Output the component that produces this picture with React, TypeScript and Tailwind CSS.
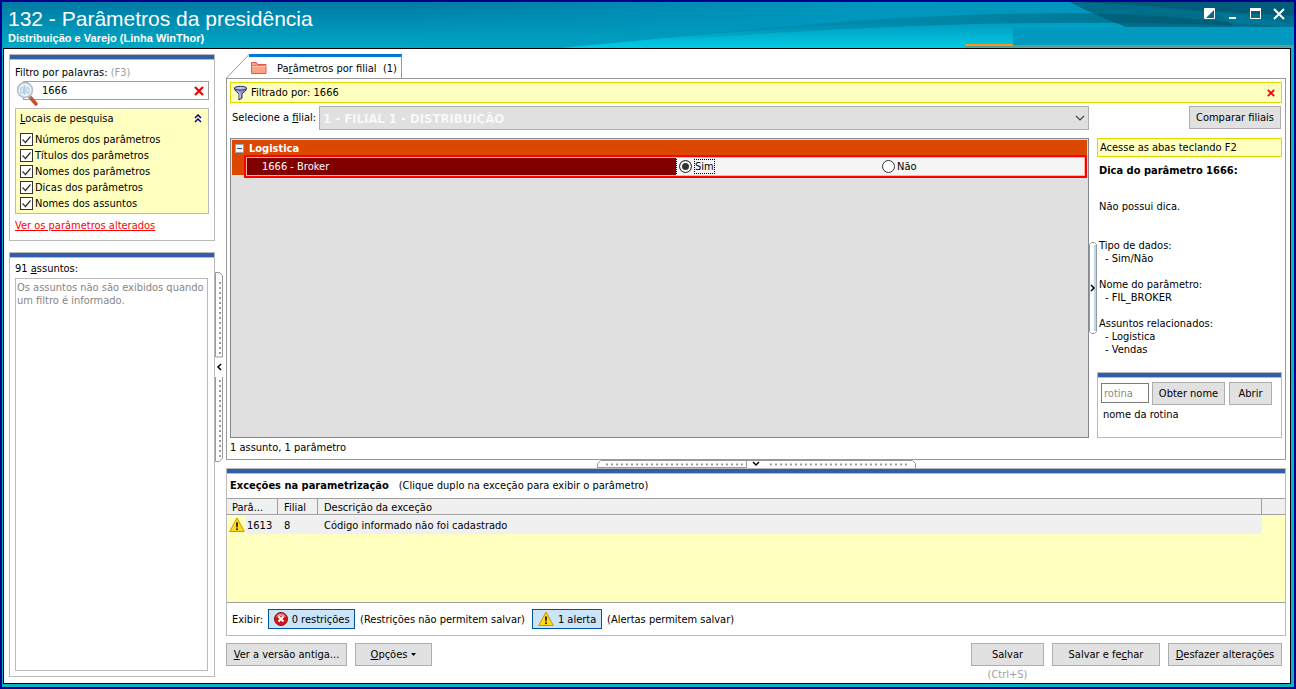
import React from "react";

const searchPlaces = [
  "Números dos parâmetros",
  "Títulos dos parâmetros",
  "Nomes dos parâmetros",
  "Dicas dos parâmetros",
  "Nomes dos assuntos",
];

const hintGroups = [
  { title: "Tipo de dados:", items: ["Sim/Não"] },
  { title: "Nome do parâmetro:", items: ["FIL_BROKER"] },
  { title: "Assuntos relacionados:", items: ["Logistica", "Vendas"] },
];

const HeaderArt = () => (
  <svg
    className="absolute inset-0 w-full h-full"
    viewBox="0 0 1292 46"
    preserveAspectRatio="none"
    aria-hidden="true"
  >
    <defs>
      <linearGradient id="sky" x1="0" y1="0" x2="0" y2="1">
        <stop offset="0" stopColor="#0079a3" />
        <stop offset="1" stopColor="#00a9c6" />
      </linearGradient>
      <linearGradient id="light" x1="0" y1="0" x2="1" y2="0">
        <stop offset="0" stopColor="#0098bf" stopOpacity="0" />
        <stop offset="0.5" stopColor="#0098bf" stopOpacity="0.9" />
        <stop offset="1" stopColor="#0098bf" />
      </linearGradient>
      <linearGradient id="shade" x1="0" y1="0" x2="1" y2="0">
        <stop offset="0" stopColor="#007a9e" stopOpacity="0" />
        <stop offset="0.5" stopColor="#00809f" stopOpacity="0.8" />
        <stop offset="1" stopColor="#00647f" />
      </linearGradient>
      <linearGradient id="glow" x1="0" y1="0" x2="0" y2="1">
        <stop offset="0" stopColor="#00c8e2" stopOpacity="0" />
        <stop offset="1" stopColor="#00cbe4" />
      </linearGradient>
    </defs>
    <rect width="1292" height="46" fill="url(#sky)" />
    <rect x="400" width="892" height="46" fill="url(#light)" />
    <path d="M560 46 C720 30 900 14 1060 20 L1292 26 V46 Z" fill="url(#glow)" />
    <path d="M640 40 C760 24 930 10 1080 11 L1160 14 L1292 26 C1050 14 860 24 640 40 Z" fill="url(#shade)" />
    <path d="M1068 0 Q1086 10 1124 25 H1292 V0 Z" fill="#00566f" opacity="0.65" />
    <path d="M1080 0 C1160 4 1240 12 1292 22 V0 Z" fill="#004c66" opacity="0.5" />
    <path d="M1210 9 Q1224 16 1232 25 H1292 V14 Z" fill="#0087a8" opacity="0.4" />
    <rect x="963" y="42" width="48" height="2" fill="#f59a1c" />
    <rect x="963" y="44" width="329" height="1" fill="#4f9a92" />
    <rect x="1011" y="25" width="281" height="18" fill="#0099bf" />
  </svg>
);

const WarningIcon = () => (
  <svg width="16" height="16" viewBox="0 0 16 16" className="shrink-0" aria-hidden="true">
    <path d="M8 1 L15.3 14.5 H0.7 Z" fill="#ffd91a" stroke="#c99700" strokeLinejoin="round" />
    <path d="M7 5.5h2l-.4 5H7.4z" fill="#111" />
    <rect x="7.2" y="11.4" width="1.7" height="1.7" fill="#111" />
  </svg>
);

const ErrorIcon = () => (
  <svg width="14" height="14" viewBox="0 0 14 14" className="shrink-0" aria-hidden="true">
    <circle cx="7" cy="7" r="6.5" fill="#d2141c" stroke="#8e1015" />
    <path d="M2 5a5.3 5.3 0 0 1 10 0Q7 3.500 2 5z" fill="#f0898b" />
    <path d="M4.500 4.500l5 5M9.500 4.500l-5 5" stroke="#fff" strokeWidth="2" />
  </svg>
);

const SearchIcon = () => (
  <svg width="24" height="27" viewBox="0 0 24 27" aria-hidden="true">
    <path d="M14 17l6 7" stroke="#c8502c" strokeWidth="3.500" strokeLinecap="round" />
    <path d="M12 15l3 3" stroke="#999" strokeWidth="2" />
    <circle cx="9" cy="10" r="7.500" fill="#dcebf6" stroke="#b4bcc2" strokeWidth="1.500" />
    <circle cx="9" cy="10" r="5.500" fill="none" stroke="#f4f9fd" />
    <path d="M8.500 5v10M4.500 8q2-1 3 0v5q-1-1-3 0zM10 8q2-1 3 0v5q-1-1-3 0z" fill="none" stroke="#a8c6dd" strokeWidth="0.800" />
  </svg>
);

const FolderIcon = () => (
  <svg width="16" height="14" viewBox="0 0 16 14" aria-hidden="true">
    <path d="M.5 12.500v-11h5l1 2h8.500v9z" fill="#ffa183" stroke="#e5584f" />
    <path d="M1.500 5.500h13" stroke="#ffc6ad" />
    <path d="M1.500 4.500h13" stroke="#ee7464" />
  </svg>
);

const FunnelIcon = () => (
  <svg width="16" height="16" viewBox="0 0 16 16" aria-hidden="true">
    <path d="M1.500 3.500c0 3 4.500 4 4.500 6v5.500l3-2V9.500c0-2 4.500-3 4.500-6z" fill="#8b92cc" stroke="#272b63" />
    <path d="M4 5.500c2 1.500 3 2.500 3 4v4" stroke="#e4e8ff" fill="none" />
    <ellipse cx="7.500" cy="3.200" rx="6.200" ry="1.900" fill="#b5bce8" stroke="#272b63" />
  </svg>
);

const CrossIcon = ({ size = 10 }: { size?: number }) => (
  <svg width={size} height={size} viewBox="0 0 10 10" aria-hidden="true">
    <path d="M1 1l8 8M9 1l-8 8" stroke="#f00000" strokeWidth="2.200" />
  </svg>
);

const Panel = ({ className = "", children }: { className?: string; children: React.ReactNode }) => (
  <section className={`flex flex-col border border-[#bababa] bg-white ${className}`}>
    <div className="h-[5px] shrink-0 border-b border-[#bababa] bg-[#315ea8]" />
    {children}
  </section>
);

const Button = ({ className = "", children }: { className?: string; children: React.ReactNode }) => (
  <button
    type="button"
    className={`flex h-[23px] shrink-0 items-center justify-center whitespace-nowrap border border-[#adadad] bg-[#e1e1e1] ${className}`}
  >
    {children}
  </button>
);

export default function App() {
  return (
    <div className="flex min-h-screen flex-col border-2 border-[#00008b] bg-linear-to-b from-[#00b6cc] to-[#0cb0c8] font-['DejaVu_Sans_Condensed','DejaVu_Sans',sans-serif] text-[11px] leading-[13px] text-black">
      <header className="relative flex h-[46px] shrink-0 justify-between overflow-hidden text-white">
        <HeaderArt />
        <div className="relative pl-1.5 pt-[5px] font-['Liberation_Sans',Arial,sans-serif]">
          <h1 className="text-[21px] leading-6">132 - Parâmetros da presidência</h1>
          <p className="text-[11px] font-bold leading-[14px]">Distribuição e Varejo (Linha WinThor)</p>
        </div>
        <div className="relative flex h-6 items-center gap-[11px] pr-[9px]">
          <button type="button" aria-label="Tema">
            <svg width="12" height="12" viewBox="0 0 12 12">
              <path d="M.5.5h10v10H.5z" fill="none" stroke="#fff" />
              <path d="M1 1h10L1 11z" fill="#fff" />
            </svg>
          </button>
          <button type="button" aria-label="Minimizar">
            <svg width="12" height="12" viewBox="0 0 12 12">
              <path d="M2 10h7" stroke="#fff" strokeWidth="2" />
            </svg>
          </button>
          <button type="button" aria-label="Maximizar">
            <svg width="12" height="12" viewBox="0 0 12 12">
              <path d="M.5.5h10v10H.5z" fill="none" stroke="#fff" />
              <path d="M0 1.500h11" stroke="#fff" strokeWidth="3" />
            </svg>
          </button>
          <button type="button" aria-label="Fechar">
            <svg width="12" height="12" viewBox="0 0 12 12">
              <path d="M1 1l10 10M11 1L1 11" stroke="#fff" strokeWidth="2" />
            </svg>
          </button>
        </div>
      </header>

      <div className="mb-[3px] ml-px mr-[3px] flex flex-1 border border-black bg-white pl-[5px] pr-1 pt-[5px]">
        <aside className="mb-1.5 flex w-[206px] shrink-0 flex-col gap-[11px]">
          <Panel className="h-[187px]">
            <div className="flex flex-1 flex-col px-[5px] pt-1.5">
              <label htmlFor="words">
                Filtro por palavras: <span className="text-[#a0a0a0]">(F3)</span>
              </label>
              <div className="relative ml-2 mt-0.5 flex h-[19px] items-center border border-[#a0a0a0] pr-1">
                <input id="words" defaultValue="1666" className="w-full min-w-0 pl-[18px] outline-none" />
                <button type="button" aria-label="Limpar filtro">
                  <CrossIcon />
                </button>
                <span className="pointer-events-none absolute -left-2 -top-0.5">
                  <SearchIcon />
                </span>
              </div>
              <fieldset className="mt-2 border border-[#bababa] bg-[#ffffc0] px-1 py-0.5">
                <div className="mb-1.5 flex h-[14px] items-center justify-between">
                  <span>
                    <u>L</u>ocais de pesquisa
                  </span>
                  <button type="button" aria-label="Recolher" className="pr-0.5">
                    <svg width="8" height="9" viewBox="0 0 8 9">
                      <path d="M1 4l3-3 3 3M1 8l3-3 3 3" fill="none" stroke="#00008b" strokeWidth="1.500" />
                    </svg>
                  </button>
                </div>
                {searchPlaces.map((place) => (
                  <label key={place} className="flex h-4 items-center gap-0.5 whitespace-nowrap">
                    <span className="grid">
                      <input
                        type="checkbox"
                        defaultChecked
                        className="peer col-start-1 row-start-1 size-[13px] appearance-none border border-[#333] bg-white"
                      />
                      <svg
                        className="pointer-events-none invisible col-start-1 row-start-1 peer-checked:visible"
                        width="13"
                        height="13"
                        viewBox="0 0 13 13"
                      >
                        <path d="M2.500 6.500l3 3 5-6" fill="none" stroke="#333" strokeWidth="1.200" />
                      </svg>
                    </span>
                    {place}
                  </label>
                ))}
              </fieldset>
              <a href="#alterados" className="mt-[5px] text-[#f00] underline">
                Ver os parâmetros alterados
              </a>
            </div>
          </Panel>

          <Panel className="flex-1">
            <div className="flex flex-1 flex-col px-[5px] pb-[5px] pt-1">
              <p>
                91 <u>a</u>ssuntos:
              </p>
              <div className="mr-px mt-[3px] flex-1 border border-[#bababa] px-px pt-0.5 text-[#868686]">
                Os assuntos não são exibidos quando um filtro é informado.
              </div>
            </div>
          </Panel>
        </aside>

        <button type="button" aria-label="Recolher filtros" className="mb-[3px] mr-[3px] self-center">
          <svg width="8" height="190" viewBox="0 0 8 190">
            <path d="M.5 85V.5h4l3 3v81.500h-7M7.500 105v81l-3 3.500h-4v-84.500" fill="none" stroke="#999" />
            <path d="M5 10v72M5 108v78" stroke="#999" strokeWidth="2" strokeDasharray="2 3" />
            <path d="M6 92l-3 3 3 3" fill="none" stroke="#000" strokeWidth="1.500" />
          </svg>
        </button>

        <main className="flex min-w-0 flex-1 flex-col">
          <div className="flex h-6 shrink-0">
            <button type="button" className="flex">
              <svg width="23" height="24" viewBox="0 0 23 24" aria-hidden="true">
                <path d="M.5 24L23 .5" fill="none" stroke="#999" />
              </svg>
              <span className="flex h-[25px] items-center gap-2.5 whitespace-pre border-r border-t-[3px] border-r-[#999] border-t-[#0078d7] bg-white pl-0.5 pr-1">
                <FolderIcon />
                <span>
                  Pa<u>r</u>âmetros por filial{"  "}(1)
                </span>
              </span>
            </button>
          </div>

          <div className="flex flex-1 flex-col border border-[#999] px-[3px] pt-[3px]">
            <div className="flex h-[21px] shrink-0 items-center gap-0.5 border border-[#dada00] bg-[#ffffc0] pl-0.5 pr-1.5">
              <FunnelIcon />
              <span className="flex-1">Filtrado por: 1666</span>
              <button type="button" aria-label="Remover filtro">
                <CrossIcon size={8} />
              </button>
            </div>

            <div className="mt-[3px] flex h-6 shrink-0">
              <label htmlFor="branch" className="w-[89px] shrink-0 whitespace-nowrap pl-0.5 pt-[5px]">
                Selecione a <u>f</u>ilial:
              </label>
              <div className="relative flex-1">
                <select
                  id="branch"
                  className="h-full w-full appearance-none border border-[#adadad] bg-[#e0e0e0] px-[3px] text-[13px] font-bold text-[#f8f8f8]"
                >
                  <option>1 - FILIAL 1 - DISTRIBUIÇÃO</option>
                </select>
                <svg
                  className="pointer-events-none absolute right-1 top-[9px]"
                  width="10"
                  height="7"
                  viewBox="0 0 10 7"
                >
                  <path d="M1 1l4 4 4-4" fill="none" stroke="#444" strokeWidth="1.200" />
                </svg>
              </div>
              <div className="flex w-[193px] shrink-0 justify-end pr-px">
                <Button className="w-[92px]">Comparar filiais</Button>
              </div>
            </div>

            <div className="mt-2 flex flex-1">
              <div className="min-w-0 flex-1 border border-[#828790] bg-[#e0e0e0] p-px">
                <div className="flex h-4 items-center gap-[5px] bg-[#dd4800] pl-[3px] font-bold text-white">
                  <svg width="9" height="9" viewBox="0 0 9 9" aria-hidden="true">
                    <path d="M.5.5h8v8h-8z" fill="#f4f6fa" stroke="#9aa3b5" />
                    <path d="M2 4.500h5" stroke="#2b4fa0" />
                  </svg>
                  Logistica
                </div>
                <div className="flex">
                  <div className="h-[19px] w-3 shrink-0 bg-[#dd4800]" />
                  <div className="-mt-px flex h-[23px] flex-1 border-2 border-[#f00] bg-[#f5f5f5] outline-1 -outline-offset-3 outline-[#ffb0a0]">
                    <div className="flex flex-1 items-center bg-[#800000] pl-4 text-white">1666 - Broker</div>
                    <fieldset className="flex w-[409px] shrink-0 items-center border border-dotted border-black pl-0.5">
                      <label className="flex w-[203px] items-center gap-0.5">
                        <input
                          type="radio"
                          name="broker"
                          defaultChecked
                          className="size-[13px] appearance-none rounded-full border border-[#333] bg-white checked:bg-[#333] checked:shadow-[inset_0_0_0_2px_#fff]"
                        />
                        <span className="border border-dotted border-black">Sim</span>
                      </label>
                      <label className="flex items-center gap-0.5">
                        <input
                          type="radio"
                          name="broker"
                          className="size-[13px] appearance-none rounded-full border border-[#333] bg-white checked:bg-[#333] checked:shadow-[inset_0_0_0_2px_#fff]"
                        />
                        Não
                      </label>
                    </fieldset>
                  </div>
                </div>
              </div>

              <button type="button" aria-label="Recolher dica" className="self-center">
                <svg width="8" height="92" viewBox="0 0 8 92">
                  <path d="M.5 2.500l2-2h3l2 2v87l-2 2h-3l-2-2z" fill="#fff" stroke="#999" />
                  <path d="M6 3v86" stroke="#b8dbea" strokeWidth="2" />
                  <path d="M2 43l3 3-3 3" fill="none" stroke="#000" strokeWidth="1.500" />
                </svg>
              </button>

              <div className="flex w-[185px] shrink-0 flex-col">
                <p className="flex h-[19px] items-center border border-[#dada00] bg-[#ffffc0] pl-0.5">
                  Acesse as abas teclando F2
                </p>
                <div className="pl-0.5">
                  <h2 className="mt-[7px] font-bold">Dica do parâmetro 1666:</h2>
                  <p className="mb-[26px] mt-[23px]">Não possui dica.</p>
                  {hintGroups.map((group) => (
                    <div key={group.title} className="mb-[13px]">
                      <p>{group.title}</p>
                      <ul className="pl-1.5">
                        {group.items.map((item) => (
                          <li key={item}>- {item}</li>
                        ))}
                      </ul>
                    </div>
                  ))}
                </div>
                <Panel className="mt-auto h-[66px]">
                  <div className="flex gap-[3px] pl-[3px] pt-1">
                    <input
                      aria-label="Rotina"
                      placeholder="rotina"
                      className="mt-px h-5 w-12 border border-[#7a7a7a] pl-0.5 placeholder:text-[#8a8a8a]"
                    />
                    <Button className="mr-px w-[73px]">Obter nome</Button>
                    <Button className="w-[43px]">Abrir</Button>
                  </div>
                  <p className="pl-[5px] pt-[3px]">nome da rotina</p>
                </Panel>
              </div>
            </div>
            <p className="h-[21px] shrink-0 pt-[3px]">1 assunto, 1 parâmetro</p>
          </div>

          <button type="button" aria-label="Recolher exceções" className="self-center">
            <svg width="319" height="8" viewBox="0 0 319 8" className="block">
              <path d="M.5 8V4l3-3.500h312l3 3V8M149.500 1v6.500H1" fill="none" stroke="#999" />
              <path d="M9 4.500h138M173 4.500h138" stroke="#999" strokeWidth="2" strokeDasharray="2 3" />
              <path d="M156 2l3 3 3-3" fill="none" stroke="#000" strokeWidth="1.500" />
            </svg>
          </button>

          <Panel className="shrink-0">
            <h2 className="flex h-6 items-center gap-2.5 pb-0.5 pl-[3px]">
              <b>Exceções na parametrização</b>
              <span>(Clique duplo na exceção para exibir o parâmetro)</span>
            </h2>
            <div className="h-[105px] border-b border-[#a0a0a0] bg-[#ffffc0]">
              <table className="w-full table-fixed border-separate border-spacing-0 text-left">
                <colgroup>
                  <col className="w-[51px]" />
                  <col className="w-10" />
                  <col />
                  <col className="w-[23px]" />
                </colgroup>
                <thead>
                  <tr className="h-[17px] bg-[#f0f0f0]">
                    <th className="border-y border-r border-[#a0a0a0] pl-[5px] pt-px font-normal">Parâ...</th>
                    <th className="border-y border-r border-[#a0a0a0] pl-1.5 pt-px font-normal">Filial</th>
                    <th className="border-y border-r border-[#a0a0a0] pl-1.5 pt-px font-normal">Descrição da exceção</th>
                    <th className="border-y border-[#a0a0a0]" aria-label="Ações" />
                  </tr>
                </thead>
                <tbody>
                  <tr className="h-5">
                    <td className="border-y border-[#ffffc0] bg-linear-to-r from-[#ffffc0] from-[19px] to-[#f0f0f0] to-[19px] pl-0.5">
                      <span className="flex items-center gap-0.5">
                        <WarningIcon />
                        1613
                      </span>
                    </td>
                    <td className="border-y border-[#ffffc0] bg-[#f0f0f0] pl-1.5">8</td>
                    <td className="border-y border-[#ffffc0] bg-[#f0f0f0] pl-1.5">
                      Código informado não foi cadastrado
                    </td>
                    <td />
                  </tr>
                </tbody>
              </table>
            </div>
            <div className="flex h-8 items-center gap-[5px] pl-[5px]">
              <span>Exibir:</span>
              <button
                type="button"
                aria-pressed="true"
                className="flex h-5 w-[87px] items-center justify-center gap-1 border border-[#00549f] bg-[#cce4f7]"
              >
                <ErrorIcon />0 restrições
              </button>
              <span className="w-[167px]">(Restrições não permitem salvar)</span>
              <button
                type="button"
                aria-pressed="true"
                className="flex h-5 w-[70px] items-center justify-center gap-1 border border-[#00549f] bg-[#cce4f7]"
              >
                <WarningIcon />1 alerta
              </button>
              <span>(Alertas permitem salvar)</span>
            </div>
          </Panel>

          <footer className="flex h-[47px] shrink-0 gap-2 pr-1 pt-[7px]">
            <Button className="w-[121px]">
              <span>
                <u>V</u>er a versão antiga...
              </span>
            </Button>
            <Button className="mr-auto w-[77px] gap-1">
              <span>
                <u>O</u>pções
              </span>
              <svg width="5" height="3" viewBox="0 0 5 3" aria-hidden="true">
                <path d="M0 0h5L2.500 3z" />
              </svg>
            </Button>
            <div>
              <Button className="w-[73px]">Salvar</Button>
              <p className="pt-0.5 text-center text-[#a0a0a0]">(Ctrl+S)</p>
            </div>
            <Button className="w-[108px]">
              <span>
                Salvar e fe<u>c</u>har
              </span>
            </Button>
            <Button className="w-[114px]">
              <span>
                <u>D</u>esfazer alterações
              </span>
            </Button>
          </footer>
        </main>
      </div>
    </div>
  );
}
